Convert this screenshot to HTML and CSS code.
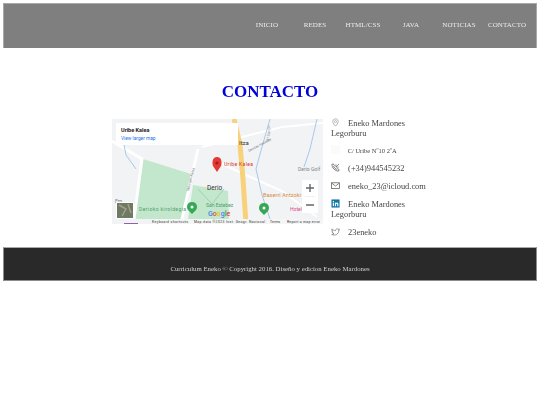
FILE: index.html
```html
<!DOCTYPE html>
<html lang="en">
<head>
  <meta charset="UTF-8">
  <title>Contacto</title>
  <link rel="stylesheet" href="styles.css">
</head>
<body>

  <header class="top-bar">
    <nav class="menu">
      <a href="#">INICIO</a>
      <a href="#">REDES</a>
      <a href="#">HTML/CSS</a>
      <a href="#">JAVA</a>
      <a href="#">NOTICIAS</a>
      <a href="#">CONTACTO</a>
    </nav>
  </header>

  <h1 class="page-title">CONTACTO</h1>

  <section class="contact">
    <div class="map">
      <svg class="map-art" width="211" height="105" viewBox="0 0 211 105">
        <rect width="211" height="105" fill="#f1f3f4"/>
        <!-- parks -->
        <path d="M31 40 L79 55 L72 90 L70 100 L22 100 Z" fill="#c2e7cc"/>
        <path d="M81 66 L116 72 L117 100 L76 100 Z" fill="#c2e7cc"/>
        <!-- streets -->
        <path d="M86 30 L70 100" stroke="#fff" stroke-width="3" fill="none"/>
        <path d="M0 22 L30 40 L22 100" stroke="#fff" stroke-width="3" fill="none"/>
        <path d="M90 28 L170 8 L211 4" stroke="#fff" stroke-width="2" fill="none"/>
        <path d="M100 40 L125 52 L170 72 L205 98" stroke="#fff" stroke-width="2" fill="none"/>
        <path d="M86 70 L100 85 L112 70" stroke="#9fd3ae" stroke-width="1" fill="none"/>
        <!-- water -->
        <path d="M9 10 L14 36 L24 50" stroke="#a9c8ee" stroke-width="1" fill="none"/>
        <path d="M158 0 L150 28 L144 50 L150 76 L158 100" stroke="#a9c8ee" stroke-width="1" fill="none"/>
        <path d="M205 0 L198 30 L192 48" stroke="#a9c8ee" stroke-width="1" fill="none"/>
        <!-- main road -->
        <path d="M122 0 L128 26 L131 60 L134 105" stroke="#f8d27a" stroke-width="5" fill="none"/>
        <!-- labels -->
        <text class="map-label" x="127" y="26" font-size="6">Itza</text>
        <text class="map-road" transform="translate(157 22) rotate(-84)">Bº San Dº</text>
        <text class="map-road" transform="translate(137 33) rotate(-28)">Sendas Hedalde</text>
        <text class="map-road" transform="translate(77 72) rotate(-76)">Mercado Kalea</text>
        <text class="map-grey" x="186" y="52">Derio Golf</text>
        <text class="map-label" x="95" y="71" font-size="6.5">Derio</text>
        <text class="map-red" x="112" y="47" textLength="29">Uribe Kalea</text>
        <text class="map-green" x="27" y="92" textLength="47">Derioko kiroldegia</text>
        <text class="map-green" x="94" y="88">San Estebez</text>
        <text class="map-orange" x="151" y="78" textLength="38">Baserri Antzoki</text>
        <text class="map-pink" x="178" y="92">Hotel Pl</text>
        <text class="map-grey" x="3" y="84">Em</text>
        <!-- pins -->
        <path d="M105 38 C100 38 100 44 101 47 L105 53 L109 47 C110 44 110 38 105 38 Z" fill="#e53935"/>
        <circle cx="105" cy="44" r="1.6" fill="#a61b1b"/>
        <path d="M80 83 C75 83 74 88 76 91 L80 95 L84 91 C86 88 85 83 80 83 Z" fill="#34a853"/>
        <circle cx="80" cy="88" r="1.5" fill="#fff"/>
        <path d="M152 84 C147 84 146 89 148 92 L152 96 L156 92 C158 89 157 84 152 84 Z" fill="#34a853"/>
        <circle cx="152" cy="89" r="1.5" fill="#fff"/>
        <!-- satellite thumb -->
        <rect x="4" y="83" width="18" height="17" fill="#fff"/>
        <rect x="5" y="84" width="16" height="15" fill="#6f7a62"/>
        <path d="M7 86 L14 90 L10 97 M16 85 L19 94" stroke="#a39f8d" stroke-width="1.5" fill="none"/>
        <text class="map-google" x="96" y="97"><tspan fill="#4285f4">G</tspan><tspan fill="#ea4335">o</tspan><tspan fill="#fbbc05">o</tspan><tspan fill="#4285f4">g</tspan><tspan fill="#34a853">l</tspan><tspan fill="#ea4335">e</tspan></text>
        <!-- zoom control -->
        <rect x="190" y="61" width="16" height="33" fill="#fff"/>
        <path d="M194 69 H202 M198 65 V73 M194 86 H202" stroke="#666" stroke-width="1.4"/>
        <path d="M193 77.5 H203" stroke="#e6e6e6" stroke-width="0.6"/>
        <!-- attribution strip -->
        <rect x="40" y="100" width="171" height="5" fill="#f5f5f5"/>
        <text class="map-small" x="40" y="104" textLength="36">Keyboard shortcuts</text>
        <text class="map-small" x="82" y="104" textLength="71">Map data ©2023 Inst. Geogr. Nacional</text>
        <text class="map-small" x="158" y="104" textLength="10">Terms</text>
        <text class="map-small" x="175" y="104" textLength="33">Report a map error</text>
        <rect x="12" y="104" width="14" height="1" fill="#8e5fb5"/>
        <!-- info card -->
        <rect x="4" y="4" width="122" height="22" fill="#fff"/>
        <text class="map-card-title" x="9" y="13">Uribe Kalea</text>
        <text class="map-card-link" x="9" y="21">View larger map</text>
      </svg>
    </div>

    <div class="details">
      <p class="detail">
        <svg class="icon" viewBox="0 0 10 10"><path d="M5 1 C2.8 1 2 2.6 2 3.8 C2 5.6 4 8 5 9 C6 8 8 5.6 8 3.8 C8 2.6 7.2 1 5 1 Z" fill="none" stroke="#999" stroke-width=".8"/><circle cx="5" cy="4" r="1.2" fill="none" stroke="#999" stroke-width=".7"/></svg>
        Eneko Mardones Legorburu
      </p>
      <p class="detail address"><span class="icon icon-blank"></span> C/ Uribe Nº10 2ºA</p>
      <p class="detail">
        <svg class="icon" viewBox="0 0 10 10"><path d="M1 1.5 L2.6 1 L3.8 3 L3 4 C3.6 5.4 4.6 6.4 6 7 L7 6.2 L9 7.4 L8.5 9 C4.5 9 1 5.5 1 1.5 Z" fill="none" stroke="#555" stroke-width=".8"/><path d="M5.5 1.5 L5.5 4.5 L8.5 4.5 M5.7 4.3 L9 1" fill="none" stroke="#555" stroke-width=".7"/></svg>
        (+34)944545232
      </p>
      <p class="detail">
        <svg class="icon" viewBox="0 0 10 10"><rect x=".7" y="2" width="8.6" height="6.2" fill="none" stroke="#555" stroke-width=".8"/><path d="M.9 2.4 L5 5.6 L9.1 2.4" fill="none" stroke="#555" stroke-width=".8"/></svg>
        eneko_23@icloud.com
      </p>
      <p class="detail">
        <svg class="icon" viewBox="0 0 10 10"><rect x=".5" y=".5" width="9" height="9" fill="#0e76a8"/><rect x="2" y="4" width="1.3" height="4" fill="#fff"/><rect x="2" y="2.2" width="1.3" height="1.2" fill="#fff"/><path d="M4.3 4 H5.5 V4.6 C6.4 3.6 8.2 3.8 8.2 5.6 V8 H6.9 V5.9 C6.9 4.9 5.6 4.9 5.6 5.9 V8 H4.3 Z" fill="#fff"/></svg>
        Eneko Mardones Legorburu
      </p>
      <p class="detail">
        <svg class="icon" viewBox="0 0 10 10"><path d="M1 2 C2.2 3.3 3.4 4 5 4.1 C4.8 2.4 6.8 1.4 8 2.6 L9.3 2.2 L8.6 3.4 L9.3 3.3 L8.7 4 C8.7 7 6.2 9 3.6 9 C2.5 9 1.5 8.7 .8 8.2 C1.8 8.2 2.7 7.9 3.3 7.4 C2.4 7.3 1.8 6.8 1.6 6.1 L2.3 6.1 C1.4 5.7 1 5 1 4.2 L1.6 4.4 C.9 3.7 .7 2.8 1 2 Z" fill="none" stroke="#666" stroke-width=".7"/></svg>
        23eneko
      </p>
    </div>
  </section>

  <footer class="bottom-bar">
    <p>Curriculum Eneko © Copyright 2016. Diseño y edicion Eneko Mardones</p>
  </footer>

</body>
</html>
```

FILE: styles.css
```css
* {
  box-sizing: border-box;
  margin: 0;
  padding: 0;
}

body {
  margin: 3px 3px 0 3px;
  width: 534px;
  background-color: #fff;
  font-family: "Liberation Serif", serif;
  filter: blur(0.3px);
}

/* Top bar */
.top-bar {
  height: 45px;
  background-color: #7f7f7f;
  border: 1px solid #a8a8a8;
  border-bottom: none;
}

.menu {
  display: flex;
  justify-content: flex-end;
  padding: 17px 5px 0 0;
}

.menu a {
  width: 48px;
  color: #ececec;
  font-size: 7px;
  line-height: 9px;
  letter-spacing: 0.1px;
  text-align: center;
  text-decoration: none;
  white-space: nowrap;
}

/* Title */
.page-title {
  margin-top: 33px;
  color: #0000d8;
  font-size: 17px;
  line-height: 22px;
  text-align: center;
}

/* Map + contact data */
.contact {
  display: flex;
  gap: 8px;
  margin-top: 16px;
  padding-left: 109px;
}

.map {
  width: 211px;
  height: 105px;
  flex: none;
}

.map-art {
  display: block;
  font-family: Roboto, sans-serif;
}

.map-label { fill: #333; }
.map-road { fill: #7a7f85; font-size: 3.5px; }
.map-grey { fill: #80868b; font-size: 5px; }
.map-red { fill: #d93025; font-size: 5px; }
.map-green { fill: #4f9e6b; font-size: 5px; }
.map-orange { fill: #d98b3d; font-size: 5.5px; }
.map-pink { fill: #e0478f; font-size: 5px; }
.map-small { fill: #333; font-size: 3.4px; }
.map-google { font-size: 7px; font-weight: 500; }
.map-card-title { fill: #222; font-size: 5.5px; font-weight: 700; }
.map-card-link { fill: #1a73e8; font-size: 4.8px; }

.details {
  width: 108px;
  margin-top: -1px;
  color: #444;
  font-size: 8.4px;
  line-height: 10.5px;
}

.detail {
  margin-bottom: 7.1px;
}

.detail:last-child {
  margin-bottom: 0;
}

.address {
  margin-top: -2px;
  font-size: 6.5px;
}

.icon {
  display: inline-block;
  width: 9px;
  height: 9px;
  margin-right: 6px;
  vertical-align: -1.5px;
}

.icon-blank {
  background-color: #fbfbfb;
}

/* Footer */
.bottom-bar {
  height: 34px;
  margin-top: 8.5px;
  padding-top: 16px;
  background-color: #292929;
  border: 1px solid #8c8c8c;
  border-top-color: #a8a8a8;
  color: #d0d0d0;
  font-size: 6.8px;
  line-height: 9px;
  text-align: center;
}
```
